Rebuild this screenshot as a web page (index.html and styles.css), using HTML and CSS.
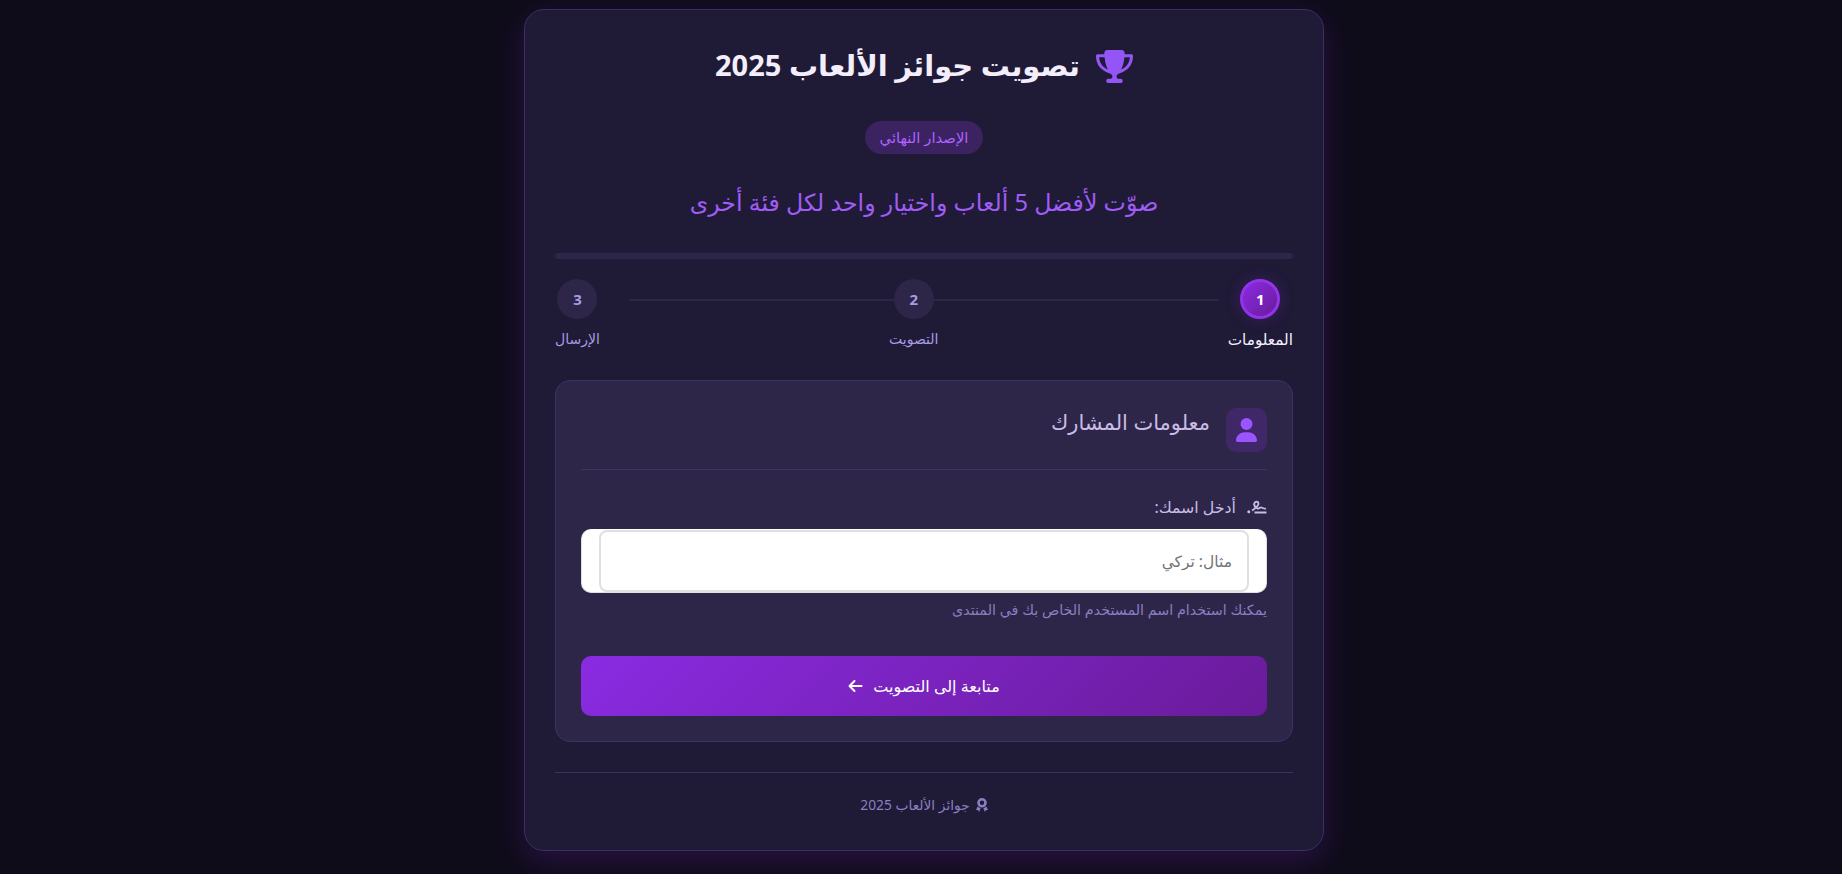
FILE: index.html
```html
<!DOCTYPE html>
<html lang="ar" dir="rtl">
<head>
<meta charset="utf-8">
<title>تصويت جوائز الألعاب 2025</title>
<link rel="stylesheet" href="styles.css">
</head>
<body>
<main class="card">
  <header class="head">
    <h1 class="title">
      <svg class="trophy" viewBox="0 0 576 512"><path d="M400 0H176c-26.5 0-48.1 21.8-47.1 48.2c.2 5.3 .4 10.6 .7 15.8H24C10.7 64 0 74.7 0 88c0 92.6 33.5 157 78.5 200.7c44.3 43.1 98.3 64.8 138.1 75.8c23.4 6.5 39.4 26 39.4 45.6c0 20.9-17 37.9-37.9 37.9H192c-17.7 0-32 14.3-32 32s14.3 32 32 32H384c17.7 0 32-14.3 32-32s-14.3-32-32-32H357.9C337 448 320 431 320 410.1c0-19.6 15.9-39.2 39.4-45.6c39.9-11 93.9-32.7 138.2-75.8C542.5 245 576 180.6 576 88c0-13.3-10.7-24-24-24H446.4c.3-5.2 .5-10.4 .7-15.8C448.1 21.8 426.5 0 400 0zM48.9 112h84.4c9.1 90.1 29.2 150.3 51.9 190.6c-24.9-11-50.8-26.5-73.2-48.3c-32-31.1-58-76-63-142.3zM464.1 254.3c-22.4 21.8-48.3 37.3-73.2 48.3c22.6-40.3 42.8-100.5 51.9-190.6h84.4c-5.1 66.3-31.1 111.2-63 142.3z"/></svg>
      <span class="title-text">تصويت جوائز الألعاب 2025</span>
    </h1>
    <div class="badge">الإصدار النهائي</div>
    <p class="subtitle">صوّت لأفضل 5 ألعاب واختيار واحد لكل فئة أخرى</p>
  </header>

  <div class="progress"></div>

  <ol class="steps">
    <li class="step active"><span class="dot">1</span><span class="step-label">المعلومات</span></li>
    <li class="step"><span class="dot">2</span><span class="step-label">التصويت</span></li>
    <li class="step"><span class="dot">3</span><span class="step-label">الإرسال</span></li>
  </ol>

  <section class="panel">
    <div class="panel-head">
      <div class="panel-icon">
        <svg viewBox="0 0 448 512"><path d="M224 256A128 128 0 1 0 224 0a128 128 0 1 0 0 256zm-45.7 48C79.8 304 0 383.8 0 482.3C0 498.7 13.3 512 29.7 512H418.3c16.4 0 29.7-13.3 29.7-29.7C448 383.8 368.2 304 269.7 304H178.3z"/></svg>
      </div>
      <h2 class="panel-title">معلومات المشارك</h2>
    </div>
    <label class="field-label" for="name">
      <svg class="sig" viewBox="0 0 20 14"><path d="M19.500 12.500H7.500M5 10.500C8 8.500 11.500 6.500 11.500 3.500 11.500 1.500 8.500 1 7.500 3 6.500 5 8 7 10.500 8.500 12 9.300 13 7 14.500 7.500S17 9 19 8.500"/><circle cx="1.800" cy="11.800" r="1.500"/></svg>
      <span>أدخل اسمك:</span>
    </label>
    <div class="input-shell"><input class="input" id="name" type="text" placeholder="مثال: تركي"></div>
    <p class="hint">يمكنك استخدام اسم المستخدم الخاص بك في المنتدى</p>
    <button class="next" type="button">
      <span>متابعة إلى التصويت</span>
      <svg viewBox="0 0 448 512"><path d="M9.400 233.400c-12.500 12.500-12.500 32.800 0 45.300l160 160c12.500 12.500 32.800 12.500 45.300 0s12.500-32.800 0-45.300L109.200 288 416 288c17.700 0 32-14.300 32-32s-14.300-32-32-32l-306.700 0L214.600 118.600c12.500-12.500 12.500-32.800 0-45.300s-32.800-12.500-45.300 0l-160 160z"/></svg>
    </button>
  </section>

  <footer class="foot">
    <svg class="award" viewBox="0 0 12 14"><path fill-rule="evenodd" d="M6 0a4.800 4.800 0 1 1 0 9.600A4.800 4.800 0 0 1 6 0zm0 2.600a2.200 2.200 0 1 0 0 4.400 2.200 2.200 0 0 0 0-4.400z"/><path d="M1.600 8.600 0 12h2l1 2 1.700-3.800a6 6 0 0 1-3.100-1.600zM10.400 8.600 12 12h-2l-1 2-1.700-3.800a6 6 0 0 0 3.100-1.600z"/></svg>
    <span>جوائز الألعاب 2025</span>
  </footer>
</main>
</body>
</html>
```
FILE: styles.css
```css
* { box-sizing: border-box; }
html, body { margin: 0; height: 100%; }
body {
  background: #0f0c1a;
  color: #f3eefc;
  font-family: "Noto Sans", "DejaVu Sans", sans-serif;
  display: flex;
  justify-content: center;
  align-items: flex-start;
  padding: 9px 0 0 6px;
  overflow: hidden;
}
.card {
  width: 800px;
  height: 842px;
  padding: 30px;
  background: #1f1a36;
  border: 1px solid #3c2f66;
  border-radius: 20px;
  box-shadow: 0 10px 30px rgba(138, 43, 226, 0.2);
}
.head { display: flex; flex-direction: column; align-items: center; }
.title {
  margin: 0;
  height: 52px;
  display: flex;
  align-items: center;
  gap: 16px;
  font-size: 29px;
  font-weight: 700;
  color: #f3eefc;
}
.title-text { padding-bottom: 3px; }
.trophy { width: 37px; height: 33px; fill: #9455f7; flex: none; }
.badge {
  margin-top: 29px;
  height: 33px;
  padding: 0 15px;
  border-radius: 17px;
  background: #3a2360;
  color: #b061ff;
  font-size: 14.8px;
  line-height: 33px;
}
.subtitle {
  margin: 31px 0 0;
  height: 36px;
  line-height: 34px;
  font-size: 23.7px;
  color: #a05cf7;
}
.progress {
  margin-top: 32px;
  height: 6px;
  border-radius: 3px;
  background: #2d2648;
}
.steps {
  position: relative;
  list-style: none;
  margin: 20px 0 0;
  padding: 0;
  display: flex;
  justify-content: space-between;
}
.steps::before {
  content: "";
  position: absolute;
  top: 20px;
  left: 10%;
  right: 10%;
  height: 2px;
  background: #2d2648;
}
.step {
  position: relative;
  display: flex;
  flex-direction: column;
  align-items: center;
  gap: 8px;
}
.dot {
  width: 40px;
  height: 40px;
  border-radius: 50%;
  background: #2d2648;
  color: #a99be0;
  font-weight: 700;
  font-size: 15px;
  display: flex;
  align-items: center;
  justify-content: center;
}
.step-label { font-size: 14px; line-height: 24px; color: #a99be0; }
.active .dot {
  background: linear-gradient(135deg, #8a2be2, #6a1b9a);
  border: 3px solid #9333ea;
  color: #fff;
  box-shadow: 0 0 15px rgba(138, 43, 226, 0.25);
}
.active .step-label { color: #f3eefc; font-size: 15.3px; }
.panel {
  margin-top: 29px;
  padding: 27px 25px 25px;
  background: #2d2648;
  border: 1px solid #3c3266;
  border-radius: 15px;
}
.panel-head {
  display: flex;
  align-items: flex-start;
  gap: 16px;
  padding-bottom: 17px;
  border-bottom: 1px solid #3c3266;
}
.panel-icon {
  width: 41px;
  height: 44px;
  border-radius: 10px;
  background: #3f2768;
  display: flex;
  align-items: center;
  justify-content: center;
}
.panel-icon svg { width: 21px; height: 24px; fill: #9a55ff; }
.panel-title {
  margin: 0;
  font-size: 21px;
  line-height: 28px;
  font-weight: 500;
  color: #c9bce6;
}
.field-label {
  margin-top: 25px;
  display: flex;
  align-items: center;
  gap: 11px;
  height: 24px;
  font-size: 15.8px;
  color: #c9bce6;
}
.sig { width: 20px; height: 14px; fill: none; stroke: #c9bce6; stroke-width: 1.800; }
.sig circle { fill: #c9bce6; stroke: none; }
.input-shell {
  margin-top: 10px;
  height: 64px;
  padding: 0 17px;
  background: #fff;
  border-radius: 10px;
  border: 1px solid #e0e0e0;
  border-top-color: #fff;
}
.input {
  display: block;
  width: 100%;
  height: 62px;
  padding: 0 15px;
  background: #fff;
  border: 2px solid #e0e0e0;
  border-radius: 8px;
  font: 15.5px "Noto Sans", "DejaVu Sans", sans-serif;
  color: #222;
  outline: none;
}
.input::placeholder { color: #757575; }
.hint {
  margin: 5px 0 0;
  line-height: 24px;
  font-size: 14.3px;
  color: #8a7fc0;
}
.next {
  margin-top: 34px;
  width: 100%;
  height: 60px;
  border: 0;
  border-radius: 10px;
  background: linear-gradient(135deg, #8a2be2, #6a1b9a);
  color: #fff;
  font: 500 16px "Noto Sans", "DejaVu Sans", sans-serif;
  display: flex;
  align-items: center;
  justify-content: center;
  gap: 10px;
}
.next svg { width: 15px; height: 16px; fill: #fff; }
.foot {
  margin-top: 30px;
  padding-top: 20px;
  border-top: 1px solid #3c3266;
  display: flex;
  justify-content: center;
  align-items: center;
  gap: 6px;
  line-height: 24px;
  font-size: 13.8px;
  color: #8a7fc0;
}
.award { width: 12px; height: 14px; fill: #8a7fc0; }
```
